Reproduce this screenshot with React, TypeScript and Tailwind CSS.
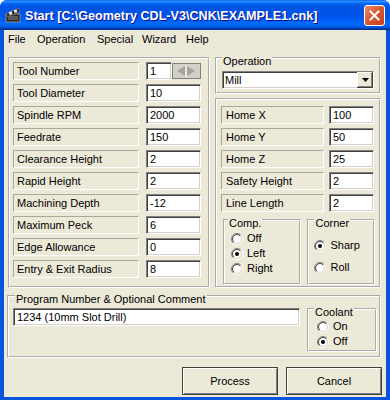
import type { ReactNode } from "react";

const leftRows: [string, string][] = [
  ["Tool Number", "1"],
  ["Tool Diameter", "10"],
  ["Spindle RPM", "2000"],
  ["Feedrate", "150"],
  ["Clearance Height", "2"],
  ["Rapid Height", "2"],
  ["Machining Depth", "-12"],
  ["Maximum Peck", "6"],
  ["Edge Allowance", "0"],
  ["Entry & Exit Radius", "8"],
];

const rightRows: [string, string][] = [
  ["Home X", "100"],
  ["Home Y", "50"],
  ["Home Z", "25"],
  ["Safety Height", "2"],
  ["Line Length", "2"],
];

const sunken =
  "border border-t-[#808080] border-l-[#808080] border-b-white border-r-white shadow-[inset_1px_1px_0_#404040,inset_-1px_-1px_0_#d4d0c8] bg-white";

function Field({ value, className }: { value: string; className: string }) {
  return (
    <input
      readOnly
      value={value}
      className={`${sunken} ${className} h-[18px] pl-[3px] text-[11px] text-black outline-none`}
    />
  );
}

function Group({
  title,
  className,
  legendClass,
  children,
}: {
  title: string;
  className: string;
  legendClass: string;
  children: ReactNode;
}) {
  return (
    <fieldset className={`border-2 border-white [border-style:groove] ${className}`}>
      <legend className={`h-[5px] px-[1px] leading-[13px] ${legendClass}`}>{title}</legend>
      {children}
    </fieldset>
  );
}

function Radio({ label, checked, className }: { label: string; checked?: boolean; className?: string }) {
  return (
    <div className={`flex h-[15px] items-center gap-[4px] ${className ?? ""}`}>
      <svg width="12" height="12" viewBox="0 0 12 12">
        <defs>
          <linearGradient id="rOut" x1="0" y1="0" x2="1" y2="1">
            <stop offset="0.45" stopColor="#808080" />
            <stop offset="0.55" stopColor="#ffffff" />
          </linearGradient>
          <linearGradient id="rIn" x1="0" y1="0" x2="1" y2="1">
            <stop offset="0.45" stopColor="#404040" />
            <stop offset="0.55" stopColor="#d4d0c8" />
          </linearGradient>
        </defs>
        <circle cx="6" cy="6" r="5.5" fill="none" stroke="url(#rOut)" />
        <circle cx="6" cy="6" r="4.5" fill="#fff" stroke="url(#rIn)" />
        {checked && <circle cx="6" cy="6" r="2" fill="#000" />}
      </svg>
      <span>{label}</span>
    </div>
  );
}

function Button({ children }: { children: ReactNode }) {
  return (
    <button className="flex h-[28px] w-[96px] items-center justify-center border border-[#404040] bg-[#ece9d8] text-[11px] text-black shadow-[inset_1px_1px_0_#fff,inset_-1px_-1px_0_#808080]">
      {children}
    </button>
  );
}

export default function App() {
  return (
    <div className="h-[400px] w-[390px] bg-white font-['Liberation_Sans',Arial,sans-serif] text-[11px] text-black">
      <div className="flex h-full flex-col rounded-t-[7px] bg-[#0855dd]">
        {/* title bar */}
        <div className="flex h-[30px] items-center rounded-t-[7px] bg-[linear-gradient(to_bottom,#0058ee_0%,#3593ff_4%,#288eff_6%,#127dff_8%,#036ffc_10%,#0262ee_14%,#0057e5_20%,#0054e3_24%,#0055eb_56%,#005bf5_66%,#026afe_76%,#0062ef_86%,#0052d6_92%,#0040ab_94%,#003092_100%)] pl-[5px] pr-[5px]">
          <svg width="16" height="16" viewBox="0 0 16 16" className="mt-[-1px]">
            <rect x="1" y="7" width="14" height="8" fill="#2b2b2b" stroke="#9a9a9a" strokeWidth="0.8" />
            <rect x="3" y="9" width="10" height="4" fill="#5a5a5a" />
            <path d="M1 6.5 L13.5 1.5 L15 5 L2.5 9.5 Z" fill="#1c1c1c" stroke="#a0a0a0" strokeWidth="0.6" />
            <path d="M3.5 5.5 L6.5 4.3 L7.6 7 L4.6 8.1 Z M8.6 3.5 L11.5 2.4 L12.5 5 L9.7 6.1 Z" fill="#e8e8e8" />
          </svg>
          <span className="ml-[4px] mt-[3px] text-[12.6px] font-bold text-white [text-shadow:1px_1px_#0f1089]">
            Start [C:\Geometry CDL-V3\CNK\EXAMPLE1.cnk]
          </span>
          <div className="ml-auto flex h-[21px] w-[21px] items-center justify-center rounded-[3px] border border-white bg-[linear-gradient(135deg,#ec8b6c_0%,#dc5a35_45%,#c63c18_100%)]">
            <svg width="11" height="11" viewBox="0 0 11 11">
              <path d="M1.5 1.5 L9.5 9.5 M9.5 1.5 L1.5 9.5" stroke="#fff" strokeWidth="2" strokeLinecap="square" />
            </svg>
          </div>
        </div>

        {/* client area */}
        <div className="mx-[4px] mb-[3px] flex flex-1 flex-col bg-[#ece9d8]">
          <div className="flex h-[18px] items-center pl-[4px]">
            <span className="w-[29px]">File</span>
            <span className="w-[60px]">Operation</span>
            <span className="w-[45px]">Special</span>
            <span className="w-[44px]">Wizard</span>
            <span>Help</span>
          </div>

          <div className="ml-[4px] mt-[9px] flex gap-[5px]">
            {/* left panel */}
            <div className="flex w-[202px] flex-col gap-[4px] border-2 border-white pb-[8px] pl-[3px] pt-[3px] [border-style:groove]">
              {leftRows.map(([label, value], i) => (
                <div key={label} className="flex items-center gap-[7px]">
                  <div className="flex h-[18px] w-[126px] items-center border border-t-[#aca899] border-l-[#aca899] border-b-white border-r-white pl-[3px]">
                    {label}
                  </div>
                  {i === 0 ? (
                    <div className="flex items-center">
                      <Field value={value} className="w-[26px]" />
                      <svg width="29" height="16" viewBox="0 0 29 16">
                        <rect x="0.5" y="0.5" width="28" height="15" fill="#d4d0c8" stroke="#808080" />
                        <path d="M5 8 L13 3 L13 13 Z" fill="#a7a398" />
                        <path d="M15 3 L23 8 L15 13 Z" fill="#a7a398" />
                        <path d="M14 2 V14" stroke="#fff" />
                      </svg>
                    </div>
                  ) : (
                    <Field value={value} className="w-[55px]" />
                  )}
                </div>
              ))}
            </div>

            {/* right column */}
            <div className="mt-[-2px] flex w-[166px] flex-col">
              <Group title="Operation" className="px-[5px] pb-[3px] pt-[11px]" legendClass="">
                <div className={`${sunken} flex h-[18px] items-center justify-between pl-[2px]`}>
                  <span>Mill</span>
                  <div className="flex h-[16px] w-[16px] items-center justify-center bg-[#ece9d8] shadow-[inset_-1px_-1px_0_#404040,inset_1px_1px_0_#fff,inset_-2px_-2px_0_#808080]">
                    <svg width="7" height="4" viewBox="0 0 7 4">
                      <path d="M0 0 H7 L3.5 4 Z" fill="#000" />
                    </svg>
                  </div>
                </div>
              </Group>

              <div className="mt-[4px] flex flex-1 flex-col border-2 border-white px-[4px] pt-[6px] [border-style:groove]">
                <div className="flex flex-col gap-[4px]">
                  {rightRows.map(([label, value]) => (
                    <div key={label} className="flex items-center gap-[5px]">
                      <div className="flex h-[18px] w-[103px] items-center border border-t-[#aca899] border-l-[#aca899] border-b-white border-r-white pl-[4px]">
                        {label}
                      </div>
                      <Field value={value} className="w-[45px]" />
                    </div>
                  ))}
                </div>
                <div className="ml-[2px] mt-[5px] flex gap-[6px]">
                  <Group title="Comp." className="w-[79px] pb-[7px] pl-[6px] pt-[9px]" legendClass="ml-[-3px]">
                    <Radio label="Off" />
                    <Radio label="Left" checked />
                    <Radio label="Right" />
                  </Group>
                  <Group title="Corner" className="w-[68px] pl-[5px] pt-[16px]" legendClass="">
                    <Radio label="Sharp" checked />
                    <Radio label="Roll" className="mt-[7px]" />
                  </Group>
                </div>
              </div>
            </div>
          </div>

          {/* program number */}
          <Group
            title="Program Number & Optional Comment"
            className="ml-[3px] mt-[5px] flex w-[374px] items-start pb-[4px] pl-[4px] pr-[2px]"
            legendClass="ml-[2px]"
          >
            <Field value="1234 (10mm Slot Drill)" className="mt-[10px] w-[287px]" />
            <Group title="Coolant" className="ml-[7px] mt-[8px] w-[70px] pb-[1px] pl-[8px] pt-[8px]" legendClass="ml-[-3px]">
              <Radio label="On" />
              <Radio label="Off" checked />
            </Group>
          </Group>

          <div className="mr-[4px] mt-[9px] flex justify-end gap-[8px]">
            <Button>Process</Button>
            <Button>Cancel</Button>
          </div>
        </div>
      </div>
    </div>
  );
}
